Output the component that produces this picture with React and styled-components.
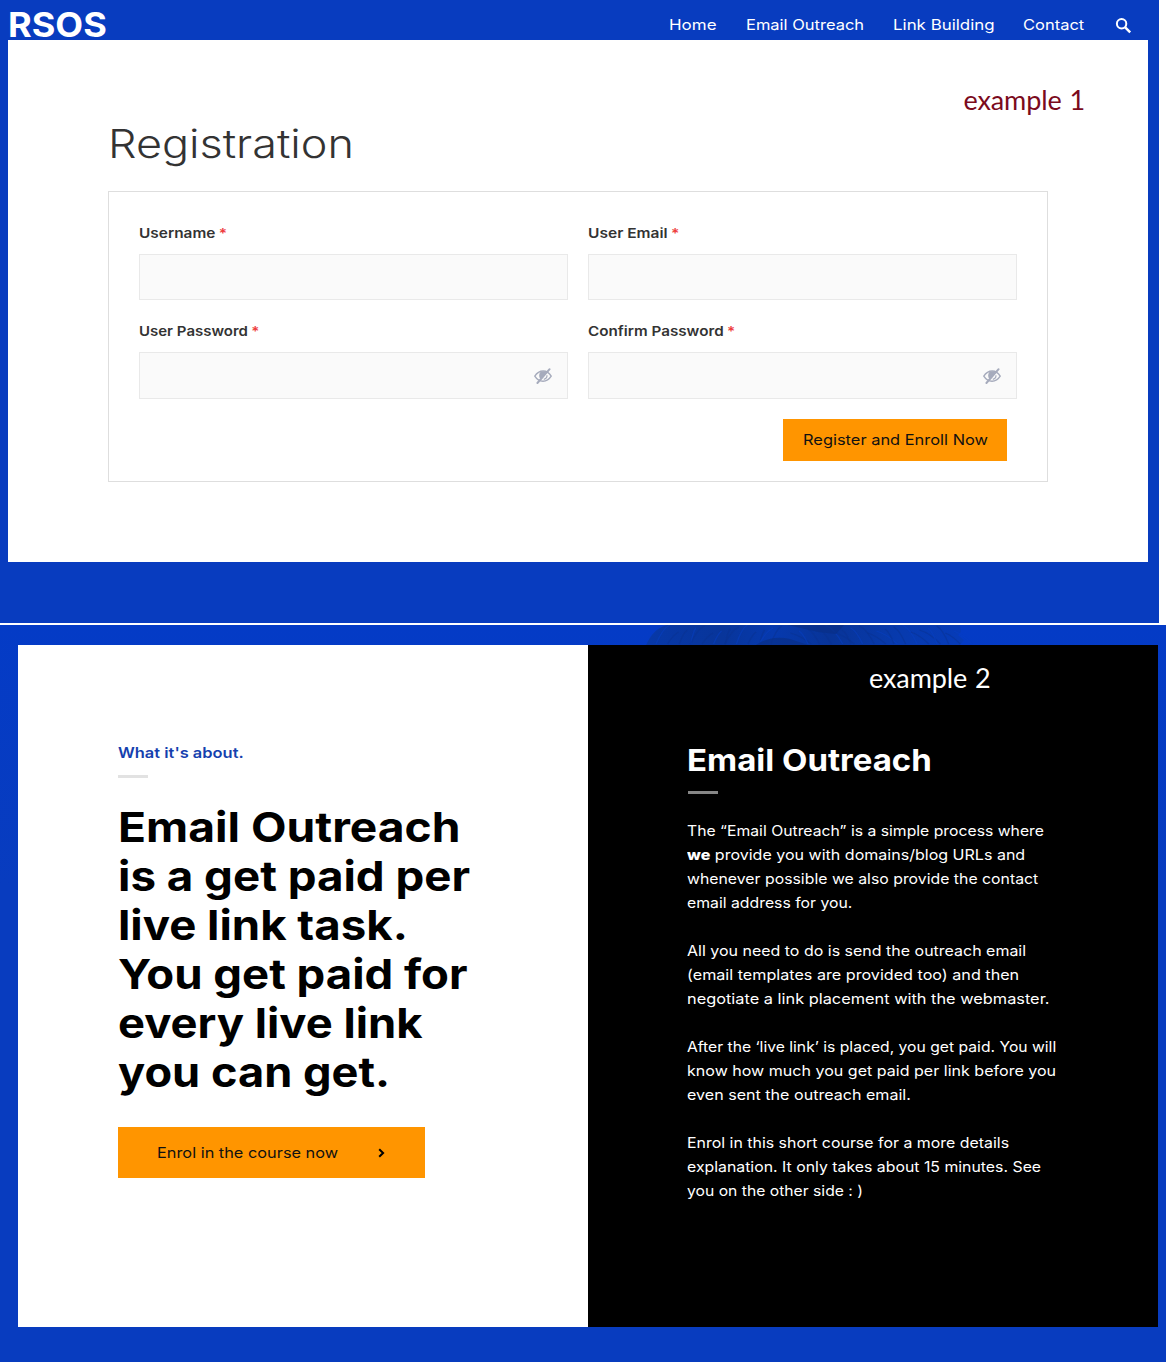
import React from "react";
import styled, { createGlobalStyle } from "styled-components";

const GlobalStyle = createGlobalStyle`
  *, *::before, *::after { box-sizing: border-box; }
  body {
    margin: 0;
    background: #fff;
    font-family: Inter, "Liberation Sans", sans-serif;
  }
  h1, h2, h3, p { margin: 0; }
`;

const Page = styled.div`
  width: 1169px;
  height: 1365px;
  overflow: hidden;
`;

const Wide = styled.span`
  display: block;
  white-space: pre;
  transform: scaleX(${(p) => p.$x});
  transform-origin: 0 50%;
`;

/* ---------- Registration ---------- */

const RegistrationScreen = styled.section`
  display: flex;
  flex-direction: column;
  width: 1159px;
  height: 623px;
  padding: 0 11px 61px 8px;
  background: #083cbf;
`;

const Header = styled.header`
  display: flex;
  justify-content: space-between;
  height: 40px;
  padding-right: 16px;
`;

const Logo = styled.div`
  color: #fff;
  font-size: 33.500px;
  font-weight: 700;
  line-height: 50px;
`;

const Nav = styled.nav`
  display: flex;
  align-items: flex-start;
  padding-top: 10px;
`;

const NavLink = styled.a`
  width: ${(p) => p.$width}px;
  color: #fff;
  font-size: 14.5px;
  line-height: 30px;
`;

const SearchIcon = styled.svg`
  width: 17px;
  height: 17px;
  margin-top: 7px;
`;

const RegistrationCard = styled.main`
  display: flex;
  flex-direction: column;
  width: 1140px;
  height: 522px;
  padding: 44px 100px 80px;
  background: #fff;
`;

const Note = styled.div`
  font-family: Lato, "Open Sans", sans-serif;
  font-size: 27px;
  line-height: 32px;
  white-space: nowrap;
  letter-spacing: -0.1px;
  word-spacing: 1px;
`;

const RedNote = styled(Note)`
  align-self: flex-end;
  margin-right: -37px;
  color: #7b0a1c;
`;

const Title = styled.h1`
  height: 75px;
  padding-top: 4px;
  color: #333;
  font-size: 39px;
  font-weight: 300;
  line-height: 48px;
`;

const Form = styled.form`
  display: grid;
  grid-template-columns: 429px 429px;
  grid-template-rows: 78px 20px 78px 20px 42px;
  column-gap: 20px;
  height: 291px;
  padding: 30px;
  border: 1px solid #dedede;
`;

const Field = styled.label`
  display: flex;
  flex-direction: column;
  grid-row: ${(p) => p.$row};
`;

const FieldLabel = styled.span`
  flex: none;
  height: 32px;
  color: #333;
  font-size: 13.5px;
  font-weight: 600;
  line-height: 22px;
`;

const Required = styled.span`
  margin-left: 3px;
  color: #ee3b3b;
`;

const InputBox = styled.span`
  display: flex;
  flex: none;
  align-items: center;
  justify-content: flex-end;
  height: ${(p) => (p.$tall ? 47 : 46)}px;
  padding-right: 15px;
  border: 1px solid #e9e9e9;
  background: #fafafa;
`;

const EyeIcon = styled.svg`
  width: 18px;
  height: 18px;
`;

const SubmitButton = styled.button`
  grid-row: 5;
  grid-column: 2;
  justify-self: end;
  width: 224px;
  height: 42px;
  margin: 1px 10px 0 0;
  padding: 0 0 0 20px;
  border: 0;
  background: #ff9500;
  color: #111;
  font: 400 14.5px/42px Inter, sans-serif;
  text-align: left;
`;

/* ---------- Course introduction ---------- */

const CourseScreen = styled.section`
  display: flex;
  flex-direction: column;
  width: 1166px;
  height: 737px;
  margin-top: 2px;
  padding: 0 8px 35px 18px;
  background: linear-gradient(180deg, #043bc6 0, #083cbf 260px);
`;

const Backdrop = styled.svg`
  flex: none;
  width: 340px;
  height: 20px;
  margin-left: 628px;
`;

const Columns = styled.div`
  display: grid;
  grid-template-columns: 570px 570px;
  height: 682px;
`;

const IntroPanel = styled.article`
  padding: 96px 100px 0;
  background: #fff;
`;

const Eyebrow = styled.h3`
  height: 34px;
  color: #153fae;
  font-size: 14.5px;
  font-weight: 600;
  line-height: 24px;
`;

const Rule = styled.div`
  width: 30px;
  height: 3px;
  background: ${(p) => p.$color};
`;

const Headline = styled.h2`
  margin-top: 25px;
  color: #000;
  font-size: 41px;
  font-weight: 700;
  line-height: 49px;
`;

const EnrolButton = styled.a`
  display: flex;
  align-items: center;
  justify-content: space-between;
  width: 307px;
  height: 51px;
  margin-top: 30px;
  padding: 0 40px 0 39px;
  background: #ff9500;
  color: #111;
  font-size: 14.5px;
`;

const Chevron = styled.svg`
  width: 7px;
  height: 10px;
`;

const DetailPanel = styled.article`
  display: flex;
  flex-direction: column;
  padding: 17px 0 0 99px;
  background: #000;
  color: #fff;
`;

const WhiteNote = styled(Note)`
  margin-left: 182px;
`;

const DetailTitle = styled.h2`
  height: 98px;
  padding-top: 46px;
  font-size: 30px;
  font-weight: 700;
  line-height: 40px;
`;

const DetailRule = styled(Rule)`
  margin: -1px 0 0 1px;
`;

const Copy = styled.div`
  display: flex;
  flex-direction: column;
  gap: 24px;
  margin-top: 25px;
  font-size: 14.5px;
  line-height: 24px;
`;

const Strong = styled.strong`
  font-weight: 800;
`;

const links = [
  ["Home", 77, 1.17],
  ["Email Outreach", 147, 1.137],
  ["Link Building", 130, 1.165],
  ["Contact", 92, 1.137],
];

const fields = [
  { label: "Username", x: 1.14, row: 1 },
  { label: "User Email", x: 1.15, row: 1 },
  { label: "User Password", x: 1.11, row: 3, secret: true },
  { label: "Confirm Password", x: 1.127, row: 3, secret: true },
];

const headline = [
  ["Email Outreach", 1.126],
  ["is a get paid per", 1.114],
  ["live link task.", 1.111],
  ["You get paid for", 1.11],
  ["every live link", 1.106],
  ["you can get.", 1.102],
];

const paragraphs = [
  [
    ["All you need to do is send the outreach email", 1.102],
    ["(email templates are provided too) and then", 1.114],
    ["negotiate a link placement with the webmaster.", 1.127],
  ],
  [
    ["After the ‘live link’ is placed, you get paid. You will", 1.082],
    ["know how much you get paid per link before you", 1.107],
    ["even sent the outreach email.", 1.109],
  ],
  [
    ["Enrol in this short course for a more details", 1.097],
    ["explanation. It only takes about 15 minutes. See", 1.092],
    ["you on the other side : )", 1.083],
  ],
];

function Lines({ items }) {
  return items.map(([text, x]) => (
    <Wide key={text} $x={x}>
      {text}
    </Wide>
  ));
}

function HiddenEye() {
  return (
    <EyeIcon viewBox="0 0 18 18" fill="none" stroke="#a6abbc">
      <path d="M.8 9.200C3 5.600 6 4 9.200 4s6 1.600 8 5.200C15 12.700 12 14.200 9 14.200S3 12.700.8 9.200Z" strokeWidth="1.4" />
      <path d="M12.500 4.900 6.500 12C4.800 10.400 4.600 7.200 6.400 5.100 8.200 4 10.800 3.900 12.500 4.900Z" fill="#a6abbc" stroke="none" />
      <path d="M13 8.200c.1 2-1.200 3.600-3.200 4.200" strokeWidth="1.2" />
      <path d="M15.600 2.200 3.400 16" strokeWidth="2" strokeLinecap="round" />
    </EyeIcon>
  );
}

function Fur() {
  const strands = Array.from({ length: 34 }, (_, i) => ({
    x: 24 + i * 8.6,
    lean: i < 14 ? -14 + (i % 4) * 3 : 9 + (i % 5) * 3,
    top: (i * 7) % 9,
    dark: i % 3 !== 0,
  }));
  return (
    <Backdrop viewBox="0 0 340 20">
      <defs>
        <linearGradient id="fur" x1="0" x2="1">
          <stop offset="0" stopColor="#0738a8" />
          <stop offset="0.24" stopColor="#08359a" />
          <stop offset="0.4" stopColor="#0639ae" />
          <stop offset="0.58" stopColor="#083498" />
          <stop offset="0.8" stopColor="#073aae" />
          <stop offset="1" stopColor="#063bb8" />
        </linearGradient>
      </defs>
      <path d="M0 20C5 10 10 3 21 0H314L315 7 312 10 318 15 314 20Z" fill="url(#fur)" />
      {strands.map((s) => (
        <path
          key={s.x}
          d={`M${s.x} ${s.top}q${s.lean / 2} 3 ${s.lean} ${19 - s.top}`}
          fill="none"
          stroke={s.dark ? "#0a3190" : "#0740c4"}
          strokeWidth="1.3"
          opacity="0.5"
        />
      ))}
      <path d="M110 20c10-7 22-9 34-6l18 6ZM142 0h56l-8 9-18-2Z" fill="#092f88" opacity="0.7" />
    </Backdrop>
  );
}

export default function App() {
  return (
    <Page>
      <GlobalStyle />
      <RegistrationScreen>
        <Header>
          <Logo>
            <Wide $x={1.078}>RSOS</Wide>
          </Logo>
          <Nav>
            {links.map(([text, width, x]) => (
              <NavLink key={text} $width={width}>
                <Wide $x={x}>{text}</Wide>
              </NavLink>
            ))}
            <SearchIcon viewBox="0 0 17 17" fill="none" stroke="#fff">
              <circle cx="6.6" cy="6.7" r="4.7" strokeWidth="2" />
              <path d="m10.2 10.3 5 5" strokeWidth="2.5" />
            </SearchIcon>
          </Nav>
        </Header>
        <RegistrationCard>
          <RedNote>example 1</RedNote>
          <Title>
            <Wide $x={1.152}>Registration</Wide>
          </Title>
          <Form>
            {fields.map((f) => (
              <Field key={f.label} $row={f.row}>
                <FieldLabel>
                  <Wide $x={f.x}>
                    {f.label}
                    <Required>*</Required>
                  </Wide>
                </FieldLabel>
                <InputBox $tall={f.secret}>{f.secret && <HiddenEye />}</InputBox>
              </Field>
            ))}
            <SubmitButton type="button">
              <Wide $x={1.132}>Register and Enroll Now</Wide>
            </SubmitButton>
          </Form>
        </RegistrationCard>
      </RegistrationScreen>

      <CourseScreen>
        <Fur />
        <Columns>
          <IntroPanel>
            <Eyebrow>
              <Wide $x={1.135}>What it's about.</Wide>
            </Eyebrow>
            <Rule $color="#e2e2e2" />
            <Headline>
              <Lines items={headline} />
            </Headline>
            <EnrolButton>
              <Wide $x={1.126}>Enrol in the course now</Wide>
              <Chevron viewBox="0 0 7 10" fill="none" stroke="#000" strokeWidth="2">
                <path d="m1.2 1.2 3.9 3.8-3.900 3.800" />
              </Chevron>
            </EnrolButton>
          </IntroPanel>
          <DetailPanel>
            <WhiteNote>example 2</WhiteNote>
            <DetailTitle>
              <Wide $x={1.1}>Email Outreach</Wide>
            </DetailTitle>
            <DetailRule $color="#868686" />
            <Copy>
              <p>
                <Wide $x={1.086}>The “Email Outreach” is a simple process where</Wide>
                <Wide $x={1.106}>
                  <Strong>we</Strong> provide you with domains/blog URLs and
                </Wide>
                <Wide $x={1.091}>whenever possible we also provide the contact</Wide>
                <Wide $x={1.089}>email address for you.</Wide>
              </p>
              {paragraphs.map((items) => (
                <p key={items[0][0]}>
                  <Lines items={items} />
                </p>
              ))}
            </Copy>
          </DetailPanel>
        </Columns>
      </CourseScreen>
    </Page>
  );
}
